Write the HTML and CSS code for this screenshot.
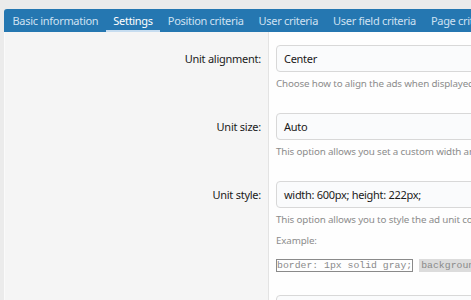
FILE: index.html
```html
<!DOCTYPE html>
<html>
<head>
<meta charset="utf-8">
<link rel="stylesheet" href="styles.css">
</head>
<body>
<div class="page">
  <div class="tabs">
    <span class="tab">Basic information</span>
    <span class="tab active">Settings</span>
    <span class="tab">Position criteria</span>
    <span class="tab">User criteria</span>
    <span class="tab">User field criteria</span>
    <span class="tab">Page criteria</span>
  </div>
  <div class="form">
    <div class="row">
      <div class="label">Unit alignment:</div>
      <div class="field">
        <div class="input">Center</div>
        <div class="hint">Choose how to align the ads when displayed in this unit.</div>
      </div>
    </div>
    <div class="row">
      <div class="label">Unit size:</div>
      <div class="field">
        <div class="input">Auto</div>
        <div class="hint">This option allows you set a custom width and height for the ad unit.</div>
      </div>
    </div>
    <div class="row">
      <div class="label">Unit style:</div>
      <div class="field">
        <div class="input">width: 600px; height: 222px;</div>
        <div class="hint">This option allows you to style the ad unit container using CSS.</div>
        <div class="hint example">Example:</div>
        <div class="codes">
          <code class="code boxed">border: 1px solid gray;</code>
          <code class="code shaded">background-color: #f5f5f5;</code>
        </div>
      </div>
    </div>
    <div class="row">
      <div class="label"></div>
      <div class="field">
        <div class="input"></div>
      </div>
    </div>
  </div>
</div>
</body>
</html>
```

FILE: styles.css
```css
html, body {
  margin: 0;
  padding: 0;
  overflow: hidden;
}
body {
  background: #ebebeb;
  font-family: "Noto Sans", "Open Sans", sans-serif;
  width: 471px;
  height: 300px;
}
.page {
  padding: 9px 0 0 4px;
  width: 467px;
  height: 291px;
  overflow: hidden;
}
.tabs {
  display: flex;
  background: #2577b1;
  height: 23px;
  border-radius: 3px 0 0 0;
  padding-left: 1px;
  white-space: nowrap;
}
.tab {
  padding: 0 7.5px;
  font-size: 11px;
  letter-spacing: -0.3px;
  line-height: 23px;
  color: #cfe1f1;
  box-sizing: border-box;
  height: 23px;
}
.tab.active {
  color: #ffffff;
  border-bottom: 2px solid #c7ddf0;
}
.form {
  background: linear-gradient(to right, #fafafa 0, #fafafa 1px, #f5f5f5 1px, #f5f5f5 264px, #e3e3e3 264px, #e3e3e3 265px, #fefefe 265px);
  padding-top: 2px;
  height: 300px;
}
.row {
  display: grid;
  grid-template-columns: 265px 1fr;
  padding: 11px 0 10px;
}
.label {
  text-align: right;
  padding-right: 8px;
  font-size: 11px;
  letter-spacing: -0.25px;
  line-height: 27px;
  color: #1a1a1a;
}
.field {
  padding-left: 7px;
  overflow: hidden;
}
.input {
  box-sizing: border-box;
  height: 27px;
  width: 400px;
  border: 1px solid #d8d8d8;
  border-radius: 4px;
  background: #fafbfc;
  padding: 0 7px;
  font-size: 11px;
  letter-spacing: -0.3px;
  line-height: 25px;
  color: #1a1a1a;
  white-space: nowrap;
}
.hint {
  margin-top: 4px;
  font-size: 9.8px;
  letter-spacing: -0.15px;
  line-height: 16px;
  color: #8c8c8c;
  white-space: nowrap;
}
.hint.example {
  margin-top: 5px;
}
.codes {
  display: flex;
  gap: 6px;
  margin-top: 10px;
  margin-bottom: 2px;
  white-space: nowrap;
}
.code {
  font-family: "Liberation Mono", monospace;
  font-size: 9.8px;
  line-height: 11px;
  color: #8a8a8a;
}
.code.boxed {
  border: 1px solid #8a8a8a;
}
.code.shaded {
  background: #dcdcdc;
  padding: 1px 2px;
}
```
